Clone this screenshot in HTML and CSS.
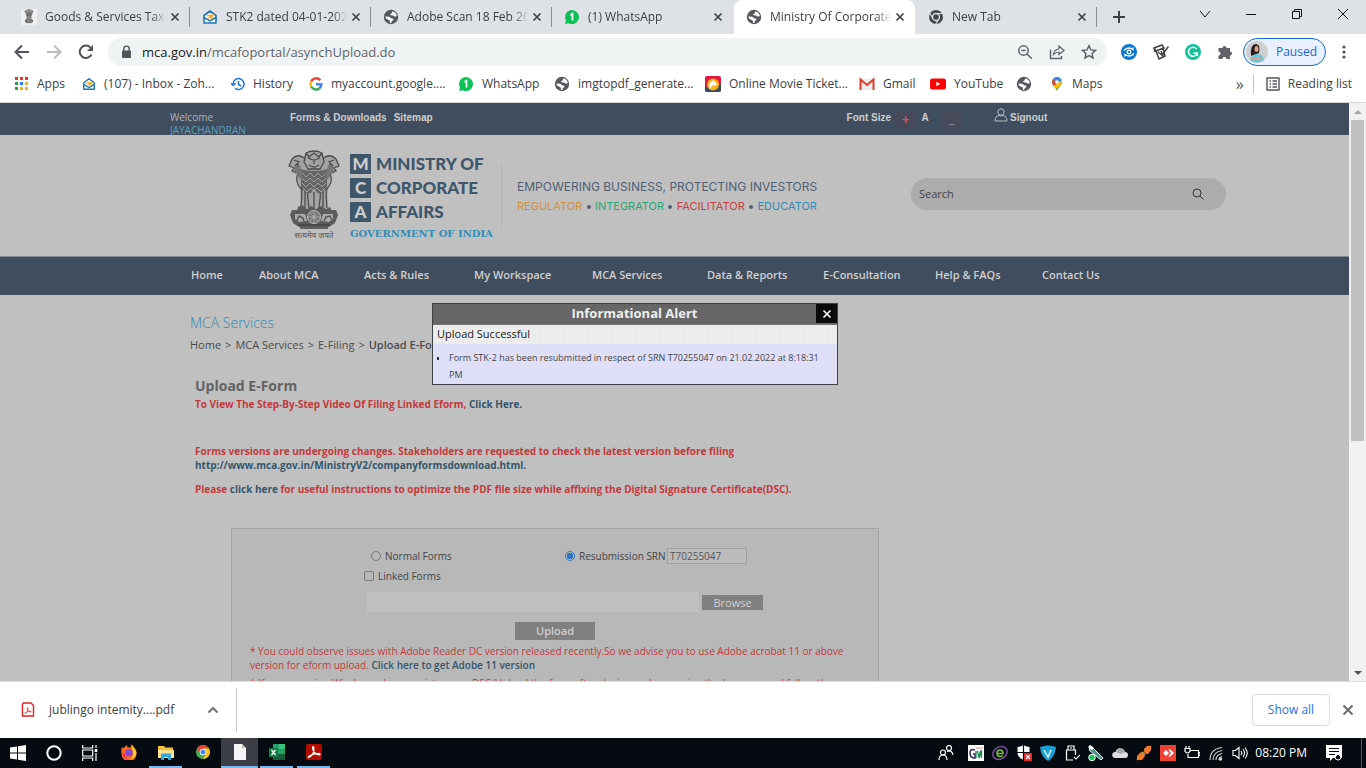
FILE: index.html
```html
<!DOCTYPE html>
<html lang="en">
<head>
<meta charset="utf-8">
<title>Ministry Of Corporate Affairs</title>
<link rel="stylesheet" href="styles.css">
</head>
<body>
<svg class="defs" aria-hidden="true">
  <symbol id="close" viewBox="0 0 16 16"><path d="M4 4l8 8M12 4l-8 8" fill="none" stroke="currentColor" stroke-width="1.9"/></symbol>
  <symbol id="globe" viewBox="0 0 16 16"><circle cx="8" cy="8" r="7.200" fill="#55595e"/><path d="M9.500 2.300c2.500.5 4 2.500 4.300 4.700l-2 .8-1.600-1.300H8.400L6.800 5.200l1.700-.8zM2.300 7.500l4.200.3 1.500 1.500 2.300.4v1.600l-1.600.8-.3 1.800-1.400.1-.2-2.500-1.700-.8L3 9.500z" fill="#fff"/></symbol>
  <symbol id="mail" viewBox="0 0 16 16"><path d="M2 6.500L8 2l6 4.500V14H2z" fill="#fff" stroke="#1976b8" stroke-width="1.600" stroke-linejoin="round"/><path d="M5 6.500h5.500L8 8.500h3" fill="none" stroke="#f5b03a" stroke-width="1.800"/><path d="M2 8.500l6 3.500 6-3.500" fill="none" stroke="#1976b8" stroke-width="1.500"/></symbol>
  <symbol id="wa" viewBox="0 0 16 16"><path d="M8 1a7 7 0 1 1-3.300 13.200L1 15l.9-3.600A7 7 0 0 1 8 1z" fill="#0cc257"/><path d="M6.300 6L8.500 4.700V11.500" fill="none" stroke="#fff" stroke-width="1.700"/></symbol>
  <symbol id="emblem" viewBox="0 0 52 90">
    <path d="M17 4q9-4 18 0l1 4q6-5 12 1l3 7-5 2 1 5-4 2-3 13-1 20H13l-1-20-3-13-4-2 1-5-5-2 3-7q6-6 12-1z" fill="#a3a3a3"/>
    <g fill="none" stroke="#4b4b4b" stroke-width="1.300">
      <path d="M18 3q8-4 16 0l2 9-4 7H20l-4-7zM20 8l5 2M32 8l-5 2M26 9v5M21 15q5 4 10 0M18 3l3 4 5-4 5 4 3-4"/>
      <path d="M16 8Q10 3 4 9l-3 7 5 2-2 3 6 2q-4 9 4 17M36 8q6-5 12 1l3 7-5 2 2 3-6 2q4 9-4 17M6 10l5 2-4 4M46 10l-5 2 4 4M10 14l-1 6M42 14l1 6"/>
      <path d="M13 20q2 15 0 38M39 20q-2 15 0 38M20 21q-2 16 1 37M32 21q2 16-1 37M17 38v20M35 38v20M26 42v18"/>
    </g>
    <path d="M12 19Q26 23 40 19L38 38Q31 49 26 38Q21 49 14 38z" fill="#666"/>
    <path d="M14 23l4 4 4-4 4 4 4-4 4 4 4-4M14 28l4 4 4-4 4 4 4-4 4 4 4-4M14 33l4 4 4-4 4 4 4-4 4 4 4-4M15 38l4 4 4-4 3 4 3-4 4 4 4-4" fill="none" stroke="#a0a0a0" stroke-width="1"/>
    <path d="M5 17l7-2 3 17-5-6zM47 17l-7-2-3 17 5-6z" fill="#777"/>
    <path d="M10 57l4-2 5 4 4-3 5 3 5-3 5 3 4-2 2 4H9zM4 60h44l2 5-3 8-6 4H11l-6-4-3-8z" fill="#5b5b5b"/>
    <path d="M7 64h10l2 7-8 1-4-3zM45 64H35l-2 7 8 1 4-3z" fill="#aaa"/><path d="M9 71l2-5 4 2 1 3M36 71l2-4 4-1 2 4" fill="none" stroke="#555" stroke-width="1.500"/>
    <circle cx="26" cy="67" r="6.500" fill="#777" stroke="#bbb"/><path d="M26 61v12M20 67h12M22 63l8 8M30 63l-8 8" stroke="#bbb" stroke-width=".7"/>
    <path d="M10 75h32M12 78h28" stroke="#444" stroke-width="1.500"/>
  </symbol>
  <symbol id="pdf" viewBox="0 0 16 16"><path d="M3 13.500C6.500 12 8.500 7.500 7.800 3.300 7.400 1.600 6 3 6.700 5 8 8.500 10.500 11 13.500 10.800c1.300-.4.300-1.600-1.500-1.500-3 0-6 1-8.800 2.700-1.300 1-.9 1.600-.2 1.500z" fill="none" stroke="currentColor" stroke-width="1.200"/></symbol>
</svg>

<header class="browser">
  <div class="tabs">
    <div class="tab"><svg class="i16 favicon"><use href="#emblem"/></svg><span class="title">Goods &amp; Services Tax (GST)</span><button class="x" aria-label="Close tab"><svg class="i14"><use href="#close"/></svg></button></div>
    <div class="tab"><svg class="i16"><use href="#mail"/></svg><span class="title">STK2 dated 04-01-2022</span><button class="x" aria-label="Close tab"><svg class="i14"><use href="#close"/></svg></button></div>
    <div class="tab"><svg class="i16"><use href="#globe"/></svg><span class="title">Adobe Scan 18 Feb 2022</span><button class="x" aria-label="Close tab"><svg class="i14"><use href="#close"/></svg></button></div>
    <div class="tab plain"><svg class="i16"><use href="#wa"/></svg><span class="title">(1) WhatsApp</span><button class="x" aria-label="Close tab"><svg class="i14"><use href="#close"/></svg></button></div>
    <div class="tab active"><svg class="i16"><use href="#globe"/></svg><span class="title">Ministry Of Corporate Affairs</span><button class="x" aria-label="Close tab"><svg class="i14"><use href="#close"/></svg></button></div>
    <div class="tab"><svg class="i16" viewBox="0 0 16 16"><circle cx="8" cy="8" r="7" fill="#43474b"/><circle cx="8" cy="8" r="3.500" fill="#43474b" stroke="#dee1e6" stroke-width="1.300"/><path d="M8 4.500h6.300M5 9.700L2 4.500M11 9.700L7.800 15" stroke="#dee1e6" stroke-width="1.200"/></svg><span class="title">New Tab</span><button class="x" aria-label="Close tab"><svg class="i14"><use href="#close"/></svg></button></div>
    <button class="newtab" aria-label="New tab"><svg class="i14" viewBox="0 0 14 14"><path d="M7 1v12M1 7h12" stroke="#3c4043" stroke-width="2"/></svg></button>
    <div class="winctl">
      <button aria-label="Search tabs"><svg class="i12" viewBox="0 0 12 12"><path d="M1 3l5 6 5-6"/></svg></button>
      <button aria-label="Minimize"><svg class="i12" viewBox="0 0 12 12"><path d="M1 6.500h10"/></svg></button>
      <button aria-label="Restore"><svg class="i12" viewBox="0 0 12 12"><path d="M1.500 3.500h7v7h-7zM3.500 3.500v-2h7v7h-2"/></svg></button>
      <button aria-label="Close"><svg class="i12" viewBox="0 0 12 12"><path d="M1 1l10 10M11 1L1 11"/></svg></button>
    </div>
  </div>

  <div class="toolbar">
    <div class="history">
      <button aria-label="Back"><svg class="i16" viewBox="0 0 16 16"><path d="M15 8H2M8 1.500L1.500 8 8 14.500" fill="none" stroke="#50545a" stroke-width="2"/></svg></button>
      <button aria-label="Forward"><svg class="i16" viewBox="0 0 16 16"><path d="M1 8h13M8 1.500L14.500 8 8 14.500" fill="none" stroke="#babcbe" stroke-width="2"/></svg></button>
      <button aria-label="Reload"><svg class="i16" viewBox="0 0 16 16"><path d="M13.500 10.500A6.200 6.200 0 1 1 12.800 4L14 5.500" fill="none" stroke="#50545a" stroke-width="2"/><path d="M15 1v6H9z" fill="#50545a"/></svg></button>
    </div>
    <div class="omnibox">
      <svg class="i14" viewBox="0 0 14 14"><rect x="3" y="5.500" width="9" height="7.500" rx="1" fill="#50545a"/><path d="M4.800 6V3.800a2.700 2.700 0 0 1 5.400 0V6" fill="none" stroke="#50545a" stroke-width="1.400"/></svg>
      <div class="url">mca.gov.in<span>/mcafoportal/asynchUpload.do</span></div>
      <div class="omni-actions">
        <svg class="i16" viewBox="0 0 16 16"><circle cx="6.500" cy="6.500" r="4.700"/><path d="M10 10l4.800 4.800M4.300 6.500h4.400"/></svg>
        <svg class="i16" viewBox="0 0 16 16"><path d="M1.500 5.500v9h11V12"/><path d="M4.500 10.500Q5 5.500 10 5V2l5 4.500-5 4V8Q7 8 4.500 10.500z" stroke-width="1.200"/></svg>
        <svg class="i16" viewBox="0 0 16 16"><path d="M8 1.700l1.900 4.200 4.600.5-3.400 3.100.9 4.500-4-2.300L4 14l.9-4.500L1.500 6.400l4.600-.5z"/></svg>
      </div>
    </div>
    <div class="extensions">
      <svg class="i16" viewBox="0 0 16 16"><circle cx="8" cy="8" r="8" fill="#0a78d1"/><path d="M3 6.500Q7 2 12 5.500V3.500M13 9.500Q9 14 4 10.500v2" fill="none" stroke="#fff" stroke-width="1.300"/><circle cx="8" cy="8" r="1.800" fill="none" stroke="#fff" stroke-width="1.300"/></svg>
      <svg class="i16" viewBox="0 0 16 16" fill="none" stroke="#3c4043" stroke-width="1.500"><path d="M1 4l8-3 2 3-8 3zM3 7l3 8 6-3-2-8M5 8l5 4M8 7l2 5M15.500 2.500L9 11M1 4l1 4"/></svg>
      <svg class="i16" viewBox="0 0 16 16"><circle cx="8" cy="8" r="8" fill="#12c39a"/><path d="M11.500 5A4.500 4.500 0 1 0 12.300 9H8.500M12.300 9v3" fill="none" stroke="#fff" stroke-width="1.500"/></svg>
      <svg class="i16" viewBox="0 0 16 16"><path d="M1.500 4h4a2 2 0 1 1 4 0H13v3.600a2 2 0 1 1 0 4V15H9.400a2 2 0 0 0-4 0H1.500v-3.600a2 2 0 0 0 0-4z" fill="#5f6368"/></svg>
    </div>
    <button class="profile"><svg class="i22" viewBox="0 0 22 22"><circle cx="11" cy="11" r="11" fill="#cfcfcf"/><path d="M5 15Q4 3 10 3q5 1 3 9z" fill="#2a1b1b"/><ellipse cx="10.500" cy="8" rx="2" ry="3" fill="#d9a58b"/><path d="M4 19q1-6 7-6t7 6q-7 5-14 0z" fill="#6ec4da"/><path d="M6 17l9 1" stroke="#d9a58b" stroke-width="2"/></svg>Paused</button>
    <button class="menu" aria-label="Menu"><svg class="i16" viewBox="0 0 16 16" fill="#50545a"><circle cx="8" cy="3" r="1.600"/><circle cx="8" cy="8" r="1.600"/><circle cx="8" cy="13" r="1.600"/></svg></button>
  </div>

  <nav class="bookmarks">
    <div class="marks">
      <a href="#"><svg class="i14" viewBox="0 0 14 14"><path d="M0 0h3v3H0zM5 0h3v3H5zM10 0h3v3h-3z" fill="#ea3323"/><path d="M0 5h3v3H0zM0 10h3v3H0z" fill="#20a050"/><path d="M5 5h3v3H5z" fill="#2a7de9"/><path d="M10 5h3v3h-3zM5 10h3v3H5zM10 10h3v3h-3z" fill="#f9ab16"/></svg>Apps</a>
      <a href="#"><svg class="i14"><use href="#mail"/></svg>(107) - Inbox - Zoh...</a>
      <a href="#"><svg class="i14" viewBox="0 0 14 14"><path d="M2 7a5.500 5.500 0 1 1 2 4.300M0 6l2.200 2.500L4.500 6M7.500 4v3.500L10 9" fill="none" stroke="#1a73e8" stroke-width="1.500"/></svg>History</a>
      <a href="#"><svg class="i14" viewBox="0 0 14 14" fill="none" stroke-width="2.500"><path d="M11.300 3.300A5.400 5.400 0 0 0 2.200 4.500" stroke="#ea4335"/><path d="M2.200 4.500a5.400 5.400 0 0 0 0 5" stroke="#fbbc05"/><path d="M2.200 9.500a5.400 5.400 0 0 0 8.300 1.700" stroke="#34a853"/><path d="M10.500 11.200A5 5 0 0 0 12.300 7.200H7" stroke="#4285f4"/></svg>myaccount.google....</a>
      <a href="#"><svg class="i16"><use href="#wa"/></svg>WhatsApp</a>
      <a href="#"><svg class="i16"><use href="#globe"/></svg>imgtopdf_generate...</a>
      <a href="#"><svg class="i16" viewBox="0 0 16 16"><rect width="16" height="16" rx="2" fill="#e5173f"/><path d="M0 11v3q0 2 2 2h12q2 0 2-2V8z" fill="#364c63"/><circle cx="8" cy="8.500" r="6" fill="#fcb316"/><path d="M4 8l4-4 4 4-2 2-2-1-3 4" fill="#fff"/></svg>Online Movie Ticket...</a>
      <a href="#"><svg class="i16" viewBox="0 0 16 16"><path d="M2 3h12v11H2z" fill="#eee"/><path d="M1.500 14V3.500L8 9l6.500-5.500V14" fill="none" stroke="#e23b2e" stroke-width="2"/></svg>Gmail</a>
      <a href="#"><svg class="i16" viewBox="0 0 16 16"><rect y="2.500" width="16" height="11" rx="2.500" fill="#f00"/><path d="M6.300 5.700v4.600L10.300 8z" fill="#fff"/></svg>YouTube</a>
      <a href="#" aria-label="Bookmark"><svg class="i16"><use href="#globe"/></svg></a>
      <a href="#"><svg class="i14" viewBox="0 0 14 14"><path d="M2 5a5 5 0 0 1 10 0c0 4-4 5-5 9-1-4-5-5-5-9z" fill="#34a853"/><path d="M3.500 9L12 3q.8 3-2 6l-4 3z" fill="#fbbc05"/><path d="M2.800 2.500L8 4 4 8.500Q2 7 2 5z" fill="#ea4335"/><path d="M7 0a5 5 0 0 1 4.500 2.800L8 6 3 2.200Q5 0 7 0z" fill="#4285f4"/><circle cx="7" cy="5" r="1.800" fill="#fff"/></svg>Maps</a>
    </div>
    <button class="more" aria-label="More bookmarks">»</button>
    <button class="reading"><svg class="i14" viewBox="0 0 14 14"><path d="M1 1h12v12H1zM3.500 4h1.500M6.500 4h4.500M3.500 7h1.500M6.500 7h4.500M3.500 10h1.500M6.500 10h4.500" fill="none" stroke="#50545a" stroke-width="1.400"/></svg>Reading list</button>
  </nav>
</header>

<div class="viewport">
  <main class="page">
    <div class="topbar">
      <div class="welcome">Welcome<br><span>JAYACHANDRAN</span></div>
      <a href="#">Forms &amp; Downloads</a><a href="#">Sitemap</a>
      <div class="fontsize">Font Size <button class="plus">+</button><button class="a">A</button><button class="minus">_</button></div>
      <a href="#" class="signout"><svg class="i14" viewBox="0 0 14 14"><circle cx="7" cy="4" r="3.200"/><path d="M1 13q0-5 4-5.500 2 1 4 0 4 .5 4 5.500z"/></svg>Signout</a>
    </div>

    <div class="masthead">
      <div class="emblem"><svg viewBox="0 0 52 80"><use href="#emblem" width="52" height="90"/></svg><span lang="hi">सत्यमेव जयते</span></div>
      <div class="mca">
        <div class="row"><b>M</b>MINISTRY OF</div>
        <div class="row"><b>C</b>CORPORATE</div>
        <div class="row"><b>A</b>AFFAIRS</div>
        <div class="goi">GOVERNMENT OF INDIA</div>
      </div>
      <div class="motto">
        <p>EMPOWERING BUSINESS, PROTECTING INVESTORS</p>
        <p class="roles"><span class="o">REGULATOR</span><i></i><span class="g">INTEGRATOR</span><i></i><span class="r">FACILITATOR</span><i></i><span class="b">EDUCATOR</span></p>
      </div>
      <form class="search"><input type="text" placeholder="Search" aria-label="Search"><button type="button" aria-label="Search"><svg class="i12" viewBox="0 0 12 12"><circle cx="5" cy="5" r="4"/><path d="M8 8l3.500 3.500"/></svg></button></form>
    </div>

    <nav class="mainnav">
      <a href="#">Home</a><a href="#">About MCA</a><a href="#">Acts &amp; Rules</a><a href="#">My Workspace</a><a href="#">MCA Services</a><a href="#">Data &amp; Reports</a><a href="#">E-Consultation</a><a href="#">Help &amp; FAQs</a><a href="#">Contact Us</a>
    </nav>

    <section class="content">
      <h1>MCA Services</h1>
      <div class="crumbs"><span>Home</span><span>&gt;</span><span>MCA Services</span><span>&gt;</span><span>E-Filing</span><span>&gt;</span><strong>Upload E-Form</strong></div>
      <div class="notices">
        <h2>Upload E-Form</h2>
        <p class="video">To View The Step-By-Step Video Of Filing Linked Eform, <a href="#">Click Here.</a></p>
        <p class="versions">Forms versions are undergoing changes. Stakeholders are requested to check the latest version before filing<br><a href="#">http://www.mca.gov.in/MinistryV2/companyformsdownload.html.</a></p>
        <p>Please <a href="#">click here</a> for useful instructions to optimize the PDF file size while affixing the Digital Signature Certificate(DSC).</p>
      </div>
      <form class="upload">
        <div class="kinds">
          <label><input type="radio" name="kind">Normal Forms</label>
          <label><input type="radio" name="kind" checked>Resubmission SRN</label>
          <input class="srn" type="text" value="T70255047" aria-label="SRN">
        </div>
        <label class="linked"><input type="checkbox">Linked Forms</label>
        <div class="file"><input type="text" aria-label="File"><button type="button">Browse</button></div>
        <button type="button" class="send">Upload</button>
        <p class="note">* You could observe issues with Adobe Reader DC version released recently.So we advise you to use Adobe acrobat 11 or above version for eform upload. <a href="#">Click here to get Adobe 11 version</a></p>
        <p class="note next">* If you are using Windows please register your DSC/Upload the form after closing and reopening the browser, and follow the</p>
      </form>
    </section>

    <div class="alert" role="dialog" aria-labelledby="alert-title">
      <div class="alert-head"><h3 id="alert-title">Informational Alert</h3><button aria-label="Close"><svg class="i14"><use href="#close"/></svg></button></div>
      <div class="alert-sub">Upload Successful</div>
      <ul><li>Form STK-2 has been resubmitted in respect of SRN T70255047 on 21.02.2022 at 8:18:31 PM</li></ul>
    </div>
  </main>
  <div class="scrollbar"><span class="up"></span><span class="thumb"></span><span class="down"></span></div>
</div>

<footer class="downloads">
  <div class="item"><svg class="i16" viewBox="0 0 16 16"><path d="M3.500 1H11l2.500 2.500V14h-11V2z" fill="#fff" stroke="#e02020" stroke-width="1.400"/><svg x="3.500" y="4" width="9" height="9" viewBox="0 0 16 16" color="#e02020"><use href="#pdf"/></svg></svg><span>jublingo intemity....pdf</span><button aria-label="Options"><svg class="i12" viewBox="0 0 12 12"><path d="M1.500 8.500L6 4l4.500 4.500" fill="none" stroke="#707478" stroke-width="2"/></svg></button></div>
  <button class="showall">Show all</button>
  <button class="dismiss" aria-label="Close"><svg class="i16" viewBox="0 0 16 16"><path d="M3.500 3.500l9 9M12.500 3.500l-9 9" stroke="currentColor" stroke-width="2"/></svg></button>
</footer>

<div class="taskbar">
  <div class="sys">
    <div><svg class="i16" viewBox="0 0 16 16" fill="#fff"><path d="M0 2.500l7-1v6H0zM8 1.300L16 0v7.500H8zM0 8.500h7v6l-7-1zM8 8.500h8V16l-8-1.300z"/></svg></div>
    <div><svg class="i16" viewBox="0 0 16 16"><circle cx="8" cy="8" r="6.700" fill="none" stroke="#fff" stroke-width="2"/></svg></div>
    <div><svg class="i16" viewBox="0 0 16 16" fill="none" stroke="#fff" stroke-width="1.200"><path d="M.7 0v3h10V0M.7 16v-3h10v3M.7 5h10v6H.7zM14 0v3M14 8v8"/><path d="M12.700 4h2.600v3h-2.600z" fill="#fff" stroke="none"/></svg></div>
  </div>
  <div class="apps">
    <div><svg class="i16" viewBox="0 0 16 16"><path d="M1 3q1 1 2 1 1-2 3-3v2q2 0 3 1 1-2 2-4 1 3 3 5 2 2 1.500 5a7 7 0 0 1-15 0Q0 6 1 3z" fill="#ff6a1f"/><path d="M11 1q4 4 4.500 8-1 5-6 6.500 4-4 2-9z" fill="#ffcb2e"/><circle cx="8" cy="8.700" r="3.600" fill="#8442d8"/><path d="M1 9q1 6 7 6.500-4-1-4-5z" fill="#f52a64"/></svg></div>
    <div class="open"><svg class="i16" viewBox="0 0 16 16"><path d="M0 2h6l1.500 1.500H15v10H0z" fill="#f5bd3b"/><path d="M0 6h16v8H0z" fill="#ffe08a"/><path d="M3 16V9.500h10V16h-3v-3H6v3z" fill="#35a7e0"/></svg></div>
    <div><svg class="i14" viewBox="0 0 14 14"><circle cx="7" cy="7" r="7" fill="#4caf50"/><path d="M1 3.500a7 7 0 0 1 12 0H7L4 8.500z" fill="#e94235"/><path d="M13 3.500A7 7 0 0 1 7 14L10 8.500 7 3.500z" fill="#fbc116"/><circle cx="7" cy="7" r="3.300" fill="#fff"/><circle cx="7" cy="7" r="2.500" fill="#4285f4"/></svg></div>
    <div class="open current"><svg class="i16" viewBox="0 0 16 16"><path d="M2 0h8l4 4v12H2z" fill="#f6f6f6"/><path d="M10 0v4h4z" fill="#bbb"/></svg></div>
    <div class="open"><svg class="i16" viewBox="0 0 16 16"><path d="M4 0h12v16H4z" fill="#21a366"/><path d="M10 0h6v5h-6z" fill="#33c481"/><path d="M4 10h12v6H4z" fill="#185c37"/><path d="M0 4h9v9H0z" fill="#107c41"/><path d="M2.500 6l4 5M6.500 6l-4 5" stroke="#fff" stroke-width="1.300"/></svg></div>
    <div class="open"><svg class="i16" viewBox="0 0 16 16" color="#fff"><rect width="16" height="16" rx="2" fill="#b30b00"/><use href="#pdf"/></svg></div>
  </div>
  <div class="tray">
    <div class="people"><svg class="i16" viewBox="0 0 16 16" fill="none" stroke="#fff" stroke-width="1.200"><circle cx="5" cy="7.500" r="2.500"/><path d="M1 15q0-5 4-5t4 5"/><circle cx="11" cy="3" r="2.500"/><path d="M9 6.500q5-2 6 3.500"/></svg></div>
    <div><svg class="i16" viewBox="0 0 16 16"><path fill="#fff" d="M0 0h16v16H0z"/><path d="M7 5Q2 3 2 8t5 5V9H5" fill="none" stroke="#34245f" stroke-width="1.500"/><path d="M8 6v7M9.500 6l1.500 7 1.500-7 1 7V5" fill="none" stroke="#188650" stroke-width="1.300"/><path d="M8 3h7" stroke="#e88" /></svg></div>
    <div><svg class="i16" viewBox="0 0 16 16" fill="none"><ellipse cx="8" cy="8" rx="7.500" ry="6" transform="rotate(-35 8 8)" stroke="#73519b" stroke-width="1.500"/><path d="M5 8.500h6q0-3.500-3-3.500T5 8.500q.5 3 3 3 2 0 2.500-1" stroke="#77b642" stroke-width="1.700"/></svg></div>
    <div><svg class="i16" viewBox="0 0 16 16"><path d="M7.500 0q3 2 6 2v6q0 4-6 7-6-3-6-7V2q3 0 6-2z" fill="#fff"/><path d="M7.500 0v15M1 7.500h13" stroke="#060b12" stroke-width="1.200"/><path d="M8 8h8v8H8z" fill="#e52727"/><path d="M10 10l4 4M14 10l-4 4" stroke="#fff" stroke-width="1.200"/></svg></div>
    <div><svg class="i16" viewBox="0 0 16 16"><path d="M0 2q8-3 16 0-1 10-8 14Q1 12 0 2z" fill="#1b9fd4"/><path d="M4 5l4 7 3-7" fill="none" stroke="#d8f4ff" stroke-width="1.500"/></svg></div>
    <div><svg class="i16" viewBox="0 0 16 16" fill="none" stroke="#fff" stroke-width="1.200"><path d="M4 5V1h6v4M11.500 10V5h-9v10H9M6 3h2M10 12l2 2 4-4"/></svg></div>
    <div><svg class="i16" viewBox="0 0 16 16"><path d="M3 1l12 12-2 2L1 5z" fill="#4d9087" stroke="#eee"/><path d="M1 1l4 3" stroke="#fff" stroke-width="3"/><circle cx="4" cy="12.500" r="3.300" fill="#16cc57" stroke="#fff"/></svg></div>
    <div><svg class="i16" viewBox="0 0 16 16"><path d="M3 13a3 3 0 0 1 .5-6Q5 2.500 9 3.500q3 0 4 3.500a3 3 0 0 1 0 6z" fill="#dedede"/><path d="M4 7q1-4 5-3.500 3 0 4 3.500l-4 2z" fill="#a8a8a8"/></svg></div>
    <div><svg class="i16" viewBox="0 0 16 16"><path d="M1 15L15 1" stroke="#bb4413" stroke-width="2"/><path d="M8 4l3-3h4v4l-3 4h-2L8 6zM1 11l4-4 4 4-3 4H1z" fill="#f47b29"/><path d="M6 7l3 3" stroke="#9aa36f" stroke-width="2"/></svg></div>
    <div><svg class="i16" viewBox="0 0 16 16"><path fill="#ef4136" d="M0 0h16v16H0z"/><path d="M3 8l3-3 3 3-3 3zM8.500 5l1.200-1L14 8l-4.300 4-1.200-1 2.500-3z" fill="#fff"/></svg></div>
    <div><svg class="i16" viewBox="0 0 16 16" fill="none" stroke="#fff" stroke-width="1.200"><path d="M6 5.500h8.500v7H4V9M1 3.500h5v3L4 8H3L1 6.500zM2 1v2.500M5 1v2.500M14.500 7.500H16v3h-1.500"/></svg></div>
    <div><svg class="i16" viewBox="0 0 16 16" fill="none" stroke="#ccc" stroke-width="1.200"><path d="M2 15Q2 4 14 2.500M5 15q0-8 9-9.500M8 15q0-5 6-6.500M11 15q0-2.500 3-3.500"/><circle cx="12.500" cy="14" r="1.200" fill="#fff"/></svg></div>
    <div><svg class="i16" viewBox="0 0 16 16" fill="none" stroke="#fff" stroke-width="1.100"><path d="M1 5.500h2.500L7 2.500v11l-3.500-3H1zM9 6q1.500 2 0 4M11 4q3 4 0 8M13 2.500q4.500 5.500 0 11"/></svg></div>
    <time>08:20 PM</time>
    <div class="note-center"><svg class="i16" viewBox="0 0 16 16"><path d="M0 0h16v13h-9l-3 3v-3H0z" fill="#fff"/><path d="M3 3.500h10M3 6.500h10M3 9.500h6" stroke="#060b12"/><path d="M9 12a3 3 0 0 0 6 0l-3-3z" fill="#060b12" stroke="#fff"/></svg></div>
    <span class="peek"></span>
  </div>
</div>
</body>
</html>
```
FILE: styles.css
```css
* { box-sizing: border-box; }
body { margin: 0; height: 100vh; display: flex; flex-direction: column; overflow: hidden; font: 12px/16px "Open Sans", "Noto Sans", sans-serif; color: #3c4043; background: #fff; }
button { font: inherit; color: inherit; border: 0; background: none; padding: 0; }
a { color: inherit; text-decoration: none; }
h1, h2, h3, p, ul { margin: 0; padding: 0; }
input { font: inherit; }
svg { flex: none; display: block; }
.defs { position: absolute; width: 0; height: 0; }
.i12 { width: 12px; height: 12px; }
.i14 { width: 14px; height: 14px; }
.i16 { width: 16px; height: 16px; }
.i22 { width: 22px; height: 22px; }

/* Browser chrome */
.browser { flex: none; border-bottom: 1px solid #d5d7da; }
.tabs { display: flex; height: 34px; background: #dee1e6; padding-left: 9px; }
.tab { flex: 0 1 181px; min-width: 0; display: flex; align-items: center; gap: 8px; padding: 0 8px 0 12px; position: relative; }
.tab:not(.active):not(.plain)::after { content: ""; position: absolute; right: 0; top: 7px; height: 20px; width: 1px; background: #888c91; }
.tab.active { margin: 0 1px; background: #fff; border-radius: 8px 8px 0 0; }
.title { flex: 1; margin-right: -6px; overflow: hidden; white-space: nowrap; -webkit-mask-image: linear-gradient(90deg, #000 88%, transparent); mask-image: linear-gradient(90deg, #000 88%, transparent); }
.favicon { background: #eef0f2; }
.x { color: #3c4043; }
.newtab { padding: 0 15px; }
.winctl { margin-left: auto; display: flex; height: 28px; }
.winctl button { width: 46px; display: grid; place-items: center; }
.winctl path { fill: none; stroke: #111; stroke-width: 1; }
.toolbar { display: flex; align-items: center; height: 36px; padding: 0 14px; }
.history { display: flex; gap: 16px; margin-right: 14px; }
.omnibox { flex: 1; display: flex; align-items: center; height: 28px; border-radius: 14px; background: #eff3f4; padding: 0 10px 0 11px; }
.url { flex: 1; margin-left: 9px; font-size: 13px; color: #202124; }
.url span { color: #5f6368; }
.omni-actions { display: flex; gap: 16px; fill: none; stroke: #5f6368; stroke-width: 1.500; }
.extensions { display: flex; gap: 16px; margin: 0 10px 0 14px; }
.profile { display: flex; align-items: center; gap: 8px; height: 28px; padding: 0 8px 0 2px; border: 1px solid #1967d2; border-radius: 14px; background: #e8f0fe; color: #1967d2; }
.menu { margin-left: 10px; }
.bookmarks { display: flex; align-items: center; height: 32px; padding: 0 14px 4px 15px; }
.marks { flex: 1; display: grid; grid-template-columns: 67px 149px 78px 149px 96px 151px 154px 71px 86px 34px auto; }
.marks a { display: flex; align-items: center; gap: 8px; white-space: nowrap; }
.more { font-size: 16px; color: #50545a; margin-right: 9px; }
.reading { display: flex; align-items: center; gap: 8px; height: 18px; padding-left: 12px; border-left: 1px solid #bdc1c6; }

/* Page */
.viewport { flex: 1; min-height: 0; display: flex; border-bottom: 1px solid #dcdcdc; }
.page { flex: 1; min-width: 0; position: relative; overflow: hidden; background: #c0c0c0; }
.scrollbar { width: 17px; display: flex; flex-direction: column; align-items: center; background: #f1f1f1; }
.up, .down { height: 17px; display: grid; place-items: center; }
.up::after, .down::after { content: ""; border: 4px solid transparent; }
.up::after { border-top: 0; border-bottom-color: #a3a3a3; }
.down { margin-top: auto; }
.down::after { border-bottom: 0; border-top-color: #505050; }
.thumb { width: 13px; height: 321px; background: #c1c1c1; }
.topbar { display: flex; height: 32px; overflow: hidden; padding: 8px 0 0 170px; background: #404d5e; color: #cdcdcd; font: 700 10px/14px "Liberation Sans", Arial, sans-serif; }
.topbar > a { margin-right: 7px; }
.welcome { width: 120px; font: 10px/13px "Open Sans", sans-serif; color: #b0b4b8; }
.welcome span { color: #5b9fb9; }
.fontsize { margin-left: 407px; display: flex; white-space: nowrap; }
.fontsize button { width: 19px; height: 18px; margin-left: 3px; }
.fontsize .plus { margin-left: 5px; border-radius: 3px; background: #46495a; color: #d2565f; font-size: 13px; }
.fontsize .a { width: 16px; height: 14px; margin-left: 2px; }
.fontsize .minus { margin-left: 9px; border-radius: 3px; background: #464a5a; }
.topbar .signout { margin-left: 33px; display: flex; gap: 2px; }
.signout svg { fill: none; stroke: #b8bcc2; margin-top: -3px; }
.masthead { display: flex; height: 121px; padding-left: 288px; }
.emblem { width: 52px; padding-top: 15px; text-align: center; font: 8px/10px "Noto Sans", "Noto Sans Devanagari", sans-serif; color: #555; white-space: nowrap; }
.emblem svg { width: 52px; height: 80px; }
.mca { width: 151px; margin-left: 10px; padding-top: 19px; display: flex; flex-direction: column; gap: 4px; font: 900 17px/20px Lato, sans-serif; color: #3f566b; white-space: nowrap; }
.row { display: flex; gap: 5px; }
.row b { width: 21px; text-align: center; color: #cfcfcf; background: #3f566b; }
.goi { font: 700 10px/16px "DejaVu Serif", serif; color: #2d8eb8; }
.motto { margin-top: 28px; height: 65px; border-left: 1px solid #b3b3b3; padding: 14px 0 0 15px; font: 12px/19px Inter, sans-serif; color: #506072; white-space: nowrap; width: 410px; }
.roles { display: flex; align-items: center; font-size: 11px; line-height: 21px; width: 300px; justify-content: space-between; }
.roles i { width: 4px; height: 4px; border-radius: 50%; background: #506072; }
.o { color: #cd9242; }
.g { color: #27a674; }
.r { color: #c9403f; }
.b { color: #2d8eb8; }
.search { flex: none; width: 315px; height: 32px; margin-top: 43px; display: flex; align-items: center; border-radius: 16px; background: #acacac; padding: 0 22px 0 8px; }
.search input { flex: 1; min-width: 0; border: 0; padding: 0; background: none; font-size: 11px; }
.search input::placeholder { color: #444; }
.search svg { fill: none; stroke: #333; }
.mainnav { display: grid; grid-template-columns: 68px 105px 110px 118px 115px 116px 112px 107px auto; align-items: center; height: 39px; padding: 0 0 2px 191px; background: #404d5e; border-top: 1px solid #868d95; color: #d0d0d0; font-size: 11px; font-weight: 600; }
.content { padding: 19px 0 0 190px; font-size: 10px; line-height: 14px; }
h1 { font-size: 14px; line-height: 18px; font-weight: 300; color: #2b8bb2; }
.crumbs { display: flex; gap: 4px; margin-top: 5px; font-size: 11px; line-height: 16px; color: #4c4c4c; }
.crumbs strong { font-weight: 600; }
.notices { padding: 24px 0 0 5px; font-weight: 700; color: #c4393c; }
.notices a, .note a { color: #35566b; }
h2 { font-size: 14px; line-height: 18px; color: #636363; }
.video { margin: 2px 0 33px; }
.versions { margin-bottom: 10px; }
.upload { width: 648px; height: 300px; margin: 32px 0 0 41px; padding: 19px 30px 0 18px; border: 1px solid #a4a4a4; background: #b8b8b8; color: #444; }
.upload label { display: flex; align-items: center; gap: 4px; }
.upload input[type=radio], .upload input[type=checkbox] { appearance: none; width: 10px; height: 10px; margin: 0; border: 1px solid #777; border-radius: 50%; }
.upload input[type=radio]:checked { border-color: #3176c4; background: radial-gradient(circle, #3176c4 0 3px, transparent 3px); }
.upload input[type=checkbox] { border-radius: 2px; }
.kinds { display: grid; grid-template-columns: 194px 102px 80px; padding-left: 121px; align-items: center; }
.kinds label { white-space: nowrap; }
.srn { height: 16px; padding: 0 2px; border: 1px solid #a0a0a0; background: #bcbcbc; color: #555; }
.linked { margin: 5px 0 0 114px; }
.file { display: flex; align-items: center; gap: 3px; margin: 9px 0 10px 117px; }
.file input { width: 332px; height: 20px; border: 0; background: #c0c0c0; }
.file button, .send { background: #808080; color: #d0d0d0; font-size: 11px; }
.file button { width: 61px; height: 15px; line-height: 15px; }
.send { display: block; width: 80px; height: 18px; margin: 0 0 4px 265px; font-weight: 600; }
.note { color: #c4393c; }
.note a { font-weight: 600; }
.next { margin-top: 4px; white-space: nowrap; }

/* Alert dialog */
.alert { position: absolute; left: 432px; top: 200px; width: 406px; border: 1px solid #3f4144; background: #dfdff8; color: #444; }
.alert-head { display: flex; align-items: flex-start; height: 21px; background: #666; border-bottom: 1px solid #777; color: #eee; }
.alert-head h3 { flex: 1; padding-left: 20px; text-align: center; font-size: 13px; line-height: 18px; font-weight: 700; }
.alert-head button { width: 21px; height: 19px; display: grid; place-items: center; background: #0b0b0b; color: #fff; }
.alert-sub { padding: 1px 4px 2px; background: repeating-linear-gradient(90deg, #e9e9e9 0 1px, #eeeeee 1px 3px); color: #1a1a1a; font-size: 11px; }
.alert ul { padding: 5px 10px 1px 16px; font-size: 9px; line-height: 17px; list-style: none; }
.alert li { position: relative; }
.alert li::before { content: ""; position: absolute; left: -12px; top: 8px; width: 2px; height: 3px; background: #333; }

/* Downloads shelf */
.downloads { flex: none; display: flex; align-items: center; height: 56px; padding: 0 10px 0 20px; }
.item { display: flex; align-items: center; height: 44px; width: 217px; border-right: 1px solid #c8c8c8; }
.item span { flex: 1; margin-left: 13px; white-space: nowrap; }
.item button { margin-right: 17px; }
.showall { margin-left: auto; width: 78px; height: 32px; border: 1px solid #dadce0; border-radius: 4px; color: #1a73e8; }
.dismiss { margin-left: 10px; color: #6b6f73; }

/* Taskbar */
.taskbar { flex: none; display: flex; justify-content: space-between; height: 30px; background: #060b12; color: #fff; }
.sys, .apps, .tray { display: flex; }
.sys > div, .apps > div, .tray > div { display: grid; place-items: center; }
.sys > div { width: 36px; }
.apps { margin: 0 auto 0 2px; }
.apps > div { width: 37px; border-bottom: 2px solid transparent; }
.apps .open { border-image: linear-gradient(90deg, transparent 4px, #76b9ed 4px 33px, transparent 33px) 2; border-width: 0 0 2px; border-style: solid; }
.apps .current { background: #3b3f45; border-image: none; border-color: #76b9ed; }
.tray > div { width: 24px; }
.tray .people { width: 36px; }
.tray time { align-self: center; margin-left: 3px; }
.tray .note-center { width: 54px; }
.peek { width: 5px; border-left: 1px solid #555; }
```
